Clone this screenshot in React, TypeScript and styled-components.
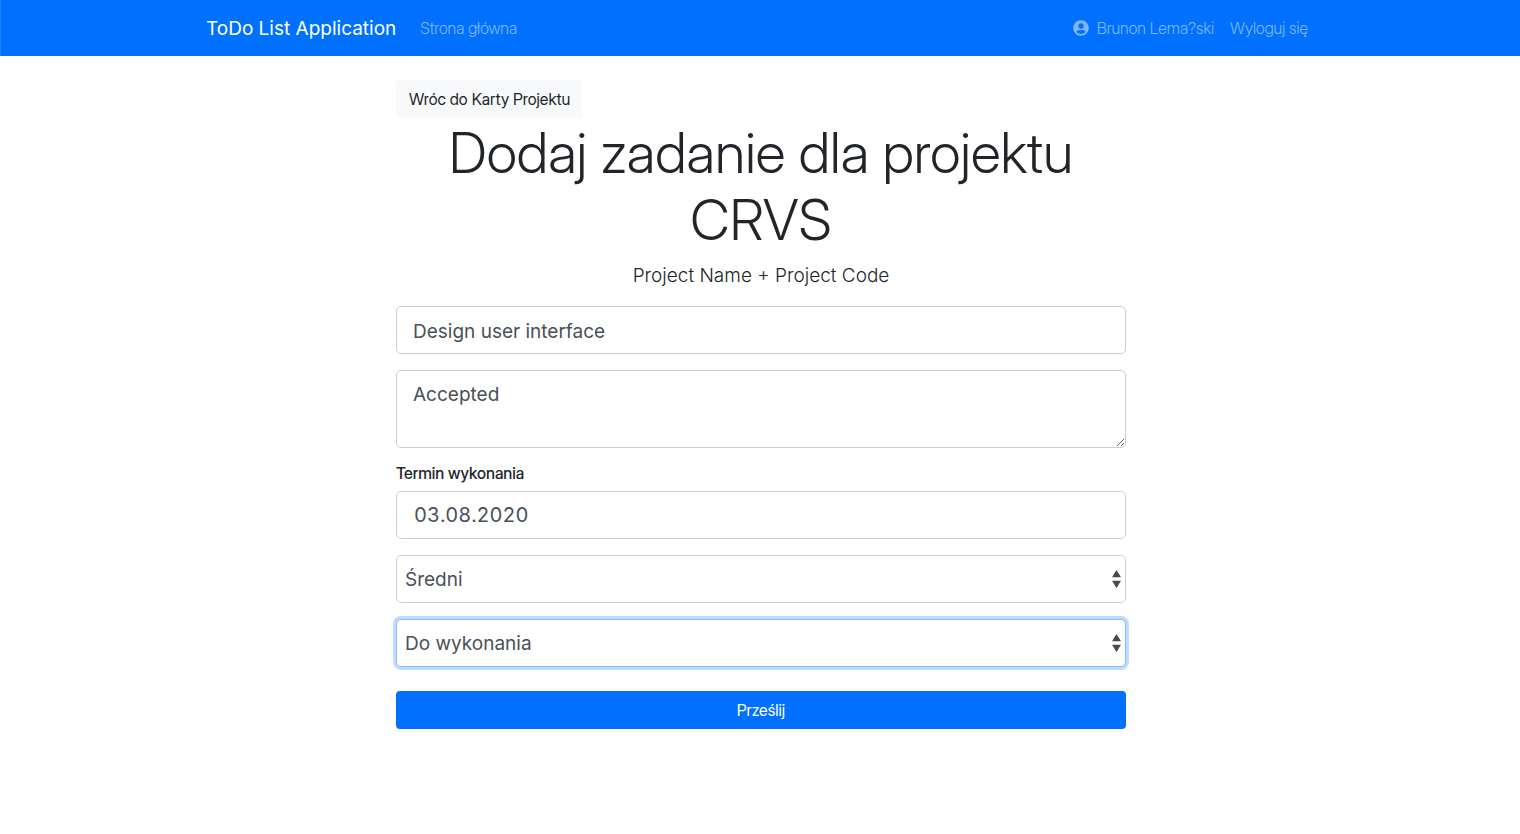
import React from 'react';
import styled, { createGlobalStyle, css } from 'styled-components';
import { FaUserCircle } from 'react-icons/fa';

const displayFont = '"Inter Display", Inter, "Liberation Sans", sans-serif';
const textFont = 'Inter, "Liberation Sans", sans-serif';

const GlobalStyle = createGlobalStyle`
  *, *::before, *::after { box-sizing: border-box; }
  body {
    margin: 0;
    background: #fff;
    color: #212529;
    font-family: ${displayFont};
    font-size: 16px;
    line-height: 24px;
  }
`;

const Navbar = styled.nav`
  background: #0071ff;
  border-left: 1px solid #2080ff;
  padding: 8px 0 8px 1px;
`;

const Container = styled.div`
  display: flex;
  align-items: center;
  max-width: 1140px;
  margin: 0 auto;
  padding: 0 15px;
`;

const Brand = styled.a`
  margin-right: 16px;
  padding-top: 2px;
  font-family: ${textFont};
  font-size: 19px;
  line-height: 38px;
  color: #fff;
  text-decoration: none;
  white-space: nowrap;
`;

const NavList = styled.ul`
  display: flex;
  margin: 0;
  padding: 0;
  list-style: none;

  & + & { margin-left: auto; }
`;

const NavLink = styled.a`
  display: flex;
  align-items: center;
  gap: 8px;
  padding: 8px;
  color: #80b8ff;
  font-weight: 300;
  text-decoration: none;
  white-space: nowrap;
`;

const Main = styled.main`
  max-width: 762px;
  margin: 0 auto;
  padding: 24px 15px 24px 17px;
`;

const BackLink = styled.a`
  display: table;
  padding: 7px 12px 7px 13px;
  border-radius: 4px;
  background: #f8f9fa;
  color: #212529;
  text-decoration: none;
`;

const Title = styled.h1`
  margin: 2px 0 6px;
  font-size: 56px;
  font-weight: 300;
  line-height: 67px;
  text-align: center;
`;

const Lead = styled.p`
  margin: 0 0 14px;
  font-family: ${textFont};
  font-size: 19px;
  font-weight: 300;
  line-height: 32px;
  text-align: center;
`;

const Form = styled.form`
  display: flex;
  flex-direction: column;
  gap: 16px;
`;

const Field = styled.div`
  display: flex;
  flex-direction: column;
  gap: 8px;
`;

const Label = styled.label`
  font-weight: 500;
  line-height: 19px;
`;

const focusRing = css`
  border-color: #80bdff;
  box-shadow: 0 0 0 3px #bfdbff;
  outline: 0;
`;

const control = css`
  display: block;
  width: 100%;
  margin: 0;
  border: 1px solid #c8cfd6;
  border-radius: 5px;
  background: #fff;
  color: #495057;
  font-family: ${textFont};
  font-size: 19px;
  line-height: 30px;

  &:focus { ${focusRing} }
`;

const Input = styled.input`
  ${control}
  height: 48px;
  padding: 9px 16px 7px;
`;

const DateInput = styled(Input)`
  padding: 8px 17px;
  font-size: 20px;
  font-variant-numeric: tabular-nums;
`;

const TextArea = styled.textarea`
  ${control}
  height: 78px;
  padding: 9px 16px 7px;
  resize: vertical;
`;

const SelectBox = styled.div`
  position: relative;
`;

const Select = styled.select<{ $active?: boolean }>`
  ${control}
  height: 48px;
  padding: 9px 24px 7px 8px;
  appearance: none;
  ${({ $active }) => $active && focusRing}
`;

const SelectArrows = styled.svg`
  position: absolute;
  top: 15px;
  right: 5px;
  pointer-events: none;
  fill: #434b52;
`;

const Submit = styled.button`
  height: 38px;
  margin-top: 8px;
  border: 0;
  border-radius: 4px;
  background: #0071ff;
  color: #fff;
  font-family: ${displayFont};
  font-size: 16px;
  line-height: 24px;
`;

type DropdownProps = { label: string; value: string; options: string[]; active?: boolean };

const Dropdown = ({ label, value, options, active }: DropdownProps) => (
  <SelectBox>
    <Select aria-label={label} defaultValue={value} $active={active}>
      {options.map((option) => (
        <option key={option}>{option}</option>
      ))}
    </Select>
    <SelectArrows width="9" height="18" viewBox="0 0 9 18" aria-hidden="true">
      <path d="M4.5 0 9 7.3H0zM0 10.8h9L4.5 18z" />
    </SelectArrows>
  </SelectBox>
);

export default function App() {
  return (
    <>
      <GlobalStyle />
      <Navbar>
        <Container>
          <Brand href="#">ToDo List Application</Brand>
          <NavList>
            <li><NavLink href="#">Strona główna</NavLink></li>
          </NavList>
          <NavList>
            <li>
              <NavLink href="#">
                <FaUserCircle size={16} />
                Brunon Lema?ski
              </NavLink>
            </li>
            <li><NavLink href="#">Wyloguj się</NavLink></li>
          </NavList>
        </Container>
      </Navbar>
      <Main>
        <BackLink href="#">Wróc do Karty Projektu</BackLink>
        <Title>Dodaj zadanie dla projektu CRVS</Title>
        <Lead>Project Name + Project Code</Lead>
        <Form>
          <Input type="text" aria-label="Nazwa" defaultValue="Design user interface" />
          <TextArea aria-label="Kryteria akceptacji" defaultValue="Accepted" />
          <Field>
            <Label htmlFor="dueDate">Termin wykonania</Label>
            <DateInput id="dueDate" type="text" inputMode="numeric" defaultValue="03.08.2020" />
          </Field>
          <Dropdown label="Priorytet" value="Średni" options={['Wysoki', 'Średni', 'Niski']} />
          <Dropdown label="Status" value="Do wykonania" options={['Do wykonania', 'W trakcie', 'Wykonane']} active />
          <Submit type="submit">Prześlij</Submit>
        </Form>
      </Main>
    </>
  );
}
